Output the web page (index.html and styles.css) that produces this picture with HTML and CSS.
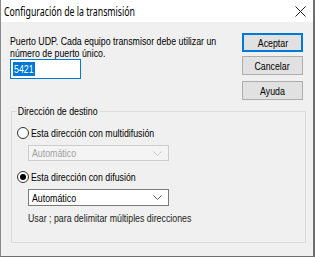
FILE: index.html
```html
<!DOCTYPE html>
<html lang="es">
<head>
<meta charset="utf-8">
<title>Configuración de la transmisión</title>
<link rel="stylesheet" href="styles.css">
</head>
<body>
<div class="window">
  <div class="titlebar">
    <span class="title sx">Configuración de la transmisión</span>
    <svg class="close" width="11" height="11" viewBox="0 0 11 11"><path d="M0.5 0.5L10.5 10.5M10.5 0.5L0.5 10.5" stroke="#222" stroke-width="1"/></svg>
  </div>
  <div class="content">
    <div class="top">
      <div class="left">
        <p class="desc sx">Puerto UDP. Cada equipo transmisor debe utilizar un<br>número de puerto único.</p>
        <div class="port"><span class="sel"><span class="sx">5421</span></span></div>
      </div>
      <div class="buttons">
        <div class="btn default"><span class="sx center">Aceptar</span></div>
        <div class="btn"><span class="sx center">Cancelar</span></div>
        <div class="btn third"><span class="sx center">Ayuda</span></div>
      </div>
    </div>
    <div class="group">
      <span class="legend sx">Dirección de destino</span>
      <div class="radio-row first">
        <span class="radio"></span>
        <span class="rlabel sx">Esta dirección con multidifusión</span>
      </div>
      <div class="combo disabled">
        <span class="ctext sx">Automático</span>
        <svg class="chev" width="9" height="5" viewBox="0 0 9 5"><path d="M0.5 0.5L4.5 4.5L8.5 0.5" fill="none" stroke="#c8c8c8" stroke-width="1"/></svg>
      </div>
      <div class="radio-row second">
        <span class="radio checked"></span>
        <span class="rlabel sx">Esta dirección con difusión</span>
      </div>
      <div class="combo enabled">
        <span class="ctext sx">Automático</span>
        <svg class="chev" width="9" height="5" viewBox="0 0 9 5"><path d="M0.5 0.5L4.5 4.5L8.5 0.5" fill="none" stroke="#606060" stroke-width="1"/></svg>
      </div>
      <p class="hint sx">Usar ; para delimitar múltiples direcciones</p>
    </div>
  </div>
</div>
</body>
</html>
```

FILE: styles.css
```css
* { box-sizing: border-box; }
html, body { margin: 0; padding: 0; }
body {
  width: 315px;
  height: 257px;
  background: #3c4a5a;
  font-family: "Liberation Sans", Arial, sans-serif;
  font-size: 11px;
  color: #000;
  overflow: hidden;
}
.sx {
  transform: scaleX(0.8);
  transform-origin: 0 50%;
  white-space: nowrap;
}
.sx.center { transform-origin: 50% 50%; display: inline-block; }
.window {
  width: 315px;
  height: 257px;
  border-left: 1px solid #8a8a8a;
  border-right: 2px solid #6e6e6e;
  border-bottom: 1px solid #6e6e6e;
  background: #f0f0f0;
  display: flex;
  flex-direction: column;
}
.titlebar {
  height: 22px;
  background: #fff;
  display: flex;
  align-items: center;
  padding-left: 3px;
  padding-right: 7px;
  flex: none;
}
.title {
  font-family: "Noto Sans", "Open Sans", sans-serif;
  font-size: 12px;
  color: #000;
  flex: 1;
  transform: scaleX(0.73);
}
.close { display: block; flex: none; }
.content {
  flex: 1;
  padding: 11px 10px 0 9px;
}
.top {
  display: flex;
}
.left { flex: 1; min-width: 0; }
.desc {
  margin: 2px 0 0 0;
  line-height: 12px;
  transform-origin: 0 0;
}
.port {
  width: 71px;
  height: 20px;
  border: 1px solid #0078d7;
  background: #fff;
  padding: 2px 0 0 2px;
}
.sel {
  display: block;
  width: 22px;
  height: 14px;
  background: #0078d7;
  color: #fff;
  line-height: 14px;
  padding-left: 1px;
}
.sel .sx { display: inline-block; }
.buttons {
  display: flex;
  flex-direction: column;
  gap: 4px;
  width: 61px;
  flex: none;
}
.btn {
  height: 19px;
  border: 1px solid #adadad;
  background: #e1e1e1;
  display: flex;
  align-items: center;
  justify-content: center;
  line-height: 12px;
}
.btn.default {
  border: 1px solid #0078d7;
  box-shadow: inset 0 0 0 1px #0078d7;
}
.btn.third { margin-top: 2px; }
.group {
  margin-top: 11px;
  margin-left: 1px;
  width: 295px;
  height: 132px;
  border: 1px solid #dcdcdc;
  padding: 0 0 0 5px;
}
.legend {
  display: block;
  width: max-content;
  margin-top: -7px;
  background: #f0f0f0;
  padding: 0 2px 0 1px;
  line-height: 12px;
  color: #000;
}
.radio-row {
  display: flex;
  align-items: center;
  height: 14px;
  gap: 2px;
}
.radio-row.first { margin-top: 9px; }
.radio-row.second { margin-top: 9px; }
.rlabel { display: inline-block; }
.radio {
  width: 12px;
  height: 12px;
  border: 1px solid #333;
  border-radius: 50%;
  background: #fff;
  display: flex;
  align-items: center;
  justify-content: center;
  flex: none;
}
.radio.checked::after {
  content: "";
  width: 6px;
  height: 6px;
  border-radius: 50%;
  background: #000;
}
.combo {
  margin-left: 11px;
  width: 141px;
  display: flex;
  align-items: center;
  justify-content: space-between;
  padding: 0 6px 0 3px;
}
.ctext { display: inline-block; }
.combo.disabled {
  margin-top: 5px;
  height: 16px;
  border: 1px solid #cccccc;
  background: #f4f4f4;
  color: #a0a0a0;
}
.combo.enabled {
  margin-top: 5px;
  height: 17px;
  border: 1px solid #7a7a7a;
  background: #fff;
  color: #000;
}
.hint {
  margin: 6px 0 0 11px;
  line-height: 12px;
  color: #222;
}
```
